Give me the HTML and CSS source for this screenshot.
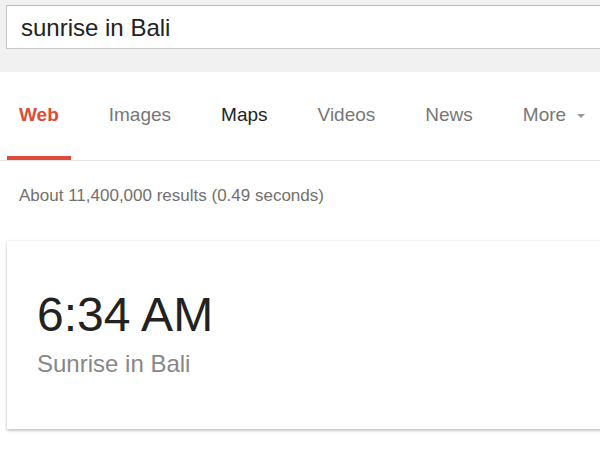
FILE: index.html
```html
<!DOCTYPE html>
<html>
<head>
<meta charset="utf-8">
<link rel="stylesheet" href="styles.css">
</head>
<body>
<div class="header">
  <div class="searchbox">sunrise in Bali</div>
</div>
<nav class="tabs">
  <span class="tab active">Web</span>
  <span class="tab">Images</span>
  <span class="tab dark">Maps</span>
  <span class="tab">Videos</span>
  <span class="tab">News</span>
  <span class="tab">More<span class="arrow"></span></span>
</nav>
<div class="stats">About 11,400,000 results (0.49 seconds)</div>
<div class="card">
  <div class="time">6:34 AM</div>
  <div class="label">Sunrise in Bali</div>
</div>
</body>
</html>
```
FILE: styles.css
```css
html, body {
  margin: 0;
  padding: 0;
  background: #fff;
  font-family: "Liberation Sans", Arial, sans-serif;
}
body {
  width: 600px;
  overflow: hidden;
  padding-bottom: 20px;
}
.header {
  background: #f1f1f1;
  height: 72px;
  padding: 5px 0 0 6px;
  box-sizing: border-box;
}
.searchbox {
  height: 44px;
  box-sizing: border-box;
  background: #fff;
  border: 1px solid #c9c9c9;
  border-top-color: #bdbdbd;
  border-right: none;
  padding: 2px 0 0 14px;
  font-size: 24px;
  line-height: 40px;
  color: #222;
}
.tabs {
  display: flex;
  gap: 26px;
  padding-left: 7px;
  border-bottom: 1px solid #e5e5e5;
}
.tab {
  display: flex;
  align-items: center;
  padding: 31px 12px 29px;
  line-height: 24px;
  font-size: 19px;
  color: #777;
  border-bottom: 4px solid transparent;
}
.tab.active {
  color: #dd4b39;
  font-weight: bold;
  border-bottom-color: #dd4b39;
}
.tab.dark {
  color: #222;
}
.arrow {
  display: inline-block;
  width: 0;
  height: 0;
  margin-left: 11px;
  margin-top: 1px;
  border-left: 4px solid transparent;
  border-right: 4px solid transparent;
  border-top: 4px solid #999;
}
.stats {
  margin-top: 25px;
  padding-left: 19px;
  font-size: 17px;
  line-height: 20px;
  color: #707070;
}
.card {
  margin: 35px -20px 0 7px;
  height: 188px;
  box-sizing: border-box;
  padding: 46px 0 0 30px;
  background: #fff;
  box-shadow: 0 2px 3px rgba(0, 0, 0, 0.2), 0 0 2px rgba(0, 0, 0, 0.12);
}
.time {
  font-size: 48px;
  line-height: 56px;
  color: #222;
}
.label {
  margin-top: 7px;
  font-size: 24px;
  line-height: 28px;
  color: #878787;
}
```
